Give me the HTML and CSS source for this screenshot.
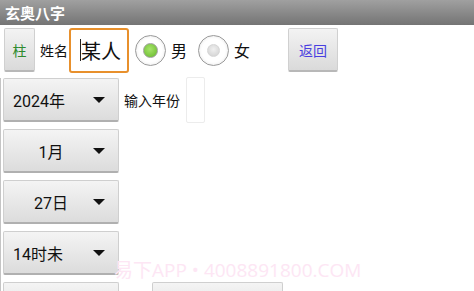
FILE: index.html
```html
<!DOCTYPE html>
<html>
<head>
<meta charset="utf-8">
<link rel="stylesheet" href="styles.css">
</head>
<body>
<div class="app">
  <div class="titlebar">玄奥八字</div>
  <div class="row1">
    <div class="btn btn-zhu">柱</div>
    <span class="lbl lbl-name">姓名</span>
    <div class="name-input"><span class="caret"></span>某人</div>
    <div class="radio-item radio-male">
      <span class="radio checked"><span class="dot"></span></span>
      <span class="radio-text">男</span>
    </div>
    <div class="radio-item radio-female">
      <span class="radio"><span class="dot"></span></span>
      <span class="radio-text">女</span>
    </div>
    <div class="btn btn-back">返回</div>
  </div>
  <div class="body">
    <div class="row">
      <div class="spinner"><span class="sp-text sp-left">2024年</span><span class="arrow"></span></div>
      <span class="lbl lbl-year">输入年份</span>
      <div class="year-input"></div>
    </div>
    <div class="row">
      <div class="spinner"><span class="sp-text">1月</span><span class="arrow"></span></div>
    </div>
    <div class="row">
      <div class="spinner"><span class="sp-text">27日</span><span class="arrow"></span></div>
    </div>
    <div class="row">
      <div class="spinner"><span class="sp-text sp-left">14时未</span><span class="arrow"></span></div>
    </div>
    <div class="row row-last">
      <div class="spinner"></div>
      <div class="spinner spinner-wide"></div>
    </div>
  </div>
  <div class="watermark">易下APP • 4008891800.COM</div>
</div>
</body>
</html>
```
FILE: styles.css
```css
html, body {
  margin: 0;
  padding: 0;
  background: #ffffff;
}
body {
  font-family: "Noto Sans CJK SC", "Noto Sans", sans-serif;
  color: #111;
  width: 474px;
  height: 291px;
  overflow: hidden;
}
.app {
  position: relative;
  width: 474px;
  height: 291px;
  overflow: hidden;
}
.titlebar {
  height: 25px;
  background: linear-gradient(#a0a0a0, #747474);
  color: #fff;
  font-weight: bold;
  font-size: 15px;
  line-height: 25px;
  padding-left: 5px;
}
.row1 {
  display: flex;
  align-items: center;
  height: 46px;
  margin-top: 2px;
}
.btn {
  box-sizing: border-box;
  height: 44px;
  background: linear-gradient(#f3f3f3, #dadada);
  border: 1px solid #d0d0d0;
  border-bottom: 2px solid #b8b8b8;
  border-radius: 2px;
  display: flex;
  align-items: center;
  justify-content: center;
  font-size: 14px;
}
.btn-zhu {
  width: 31px;
  margin-left: 4px;
  color: #2e8b2e;
}
.lbl {
  font-size: 14px;
  color: #111;
}
.lbl-name {
  margin-left: 5px;
}
.name-input {
  box-sizing: border-box;
  width: 60px;
  height: 45px;
  margin-left: 1px;
  border: 2px solid #e8902c;
  border-radius: 3px;
  font-size: 20px;
  display: flex;
  align-items: center;
  padding-left: 9px;
  color: #111;
}
.caret {
  width: 1px;
  height: 22px;
  background: #222;
}
.radio-item {
  display: flex;
  align-items: center;
}
.radio-male {
  margin-left: 6px;
}
.radio-female {
  margin-left: 11px;
}
.radio {
  box-sizing: border-box;
  width: 31px;
  height: 31px;
  border-radius: 50%;
  border: 1px solid #9a9a9a;
  background: radial-gradient(circle at 50% 50%, #ffffff 55%, #e6e6e6 100%);
  box-shadow: inset 0 0 0 1px #f4f4f4;
  display: flex;
  align-items: center;
  justify-content: center;
}
.dot {
  width: 11px;
  height: 11px;
  border-radius: 50%;
  background: radial-gradient(circle at 50% 40%, #f0f0f0, #cfcfcf);
  border: 1px solid #d6d6d6;
}
.checked .dot {
  width: 13px;
  height: 13px;
  background: radial-gradient(circle at 45% 40%, #a6e46a, #66b82a);
  border: 1px solid #a0a0a0;
}
.radio-text {
  font-size: 16px;
  margin-left: 5px;
}
.btn-back {
  width: 50px;
  margin-left: 38px;
  color: #4a3fe0;
}
.body {
  margin-top: 5px;
  border-left: 1px solid #c4c4c4;
  display: flex;
  flex-direction: column;
  gap: 7px;
}
.row {
  display: flex;
  align-items: center;
  height: 44px;
}
.spinner {
  box-sizing: border-box;
  position: relative;
  width: 116px;
  height: 44px;
  margin-left: 2px;
  background: linear-gradient(#f4f4f4, #dcdcdc);
  border: 1px solid #cfcfcf;
  border-bottom: 2px solid #b0b0b0;
  border-radius: 2px;
  display: flex;
  align-items: center;
}
.sp-text {
  width: 80px;
  margin-left: 7px;
  text-align: center;
  font-family: "Roboto", "Noto Sans CJK SC", sans-serif;
  font-size: 16px;
  color: #111;
}
.sp-left {
  text-align: left;
  margin-left: 9px;
  width: 78px;
}
.arrow {
  width: 0;
  height: 0;
  border-left: 6px solid transparent;
  border-right: 6px solid transparent;
  border-top: 6px solid #111;
  margin-left: 2px;
}
.lbl-year {
  margin-left: 5px;
  font-size: 14px;
}
.year-input {
  box-sizing: border-box;
  width: 19px;
  height: 46px;
  margin-left: 6px;
  border: 1px solid #ececec;
  border-radius: 2px;
}
.row-last {
  align-items: flex-start;
}
.spinner-wide {
  width: 131px;
  margin-left: 33px;
}
.watermark {
  position: absolute;
  left: 114px;
  top: 255px;
  font-family: "Open Sans", "Noto Sans CJK SC", sans-serif;
  font-size: 19px;
  color: #fde6f4;
  white-space: nowrap;
}
```
